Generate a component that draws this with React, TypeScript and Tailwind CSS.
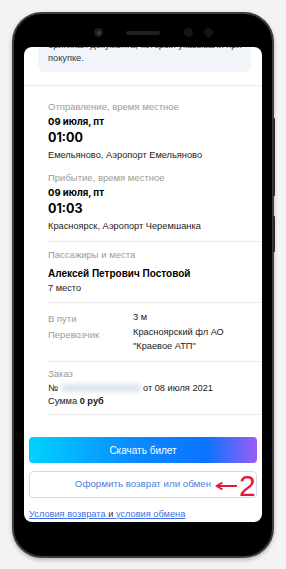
export default function App() {
  return (
    <div className="w-[286px] h-[569px] overflow-hidden bg-[#f3f3f3] pt-[12px] pl-[12px] font-['Liberation_Sans',Arial,sans-serif]">
      <div className="relative w-[262px] h-[546px] rounded-[30px] bg-black border-[2px] border-[#3d3d3d] shadow-[0_2px_4px_rgba(0,0,0,0.25)] flex flex-col">
        {/* side buttons */}
        <div className="absolute right-[-3px] top-[104px] w-[2px] h-[78px] rounded-full bg-[#2a2a2a]" />
        <div className="absolute right-[-3px] top-[202px] w-[2px] h-[36px] rounded-full bg-[#2a2a2a]" />

        {/* top bezel */}
        <div className="h-[33px] pt-[4px] pl-[80px] flex items-center">
          <div className="w-[9px] h-[9px] rounded-full bg-[#1d1d1f] flex items-center justify-center">
            <div className="w-[4px] h-[4px] rounded-full bg-[#3a3d44]" />
          </div>
          <div className="ml-[23px] w-[34px] h-[4px] rounded-full bg-[#202020]" />
          <div className="ml-[24px] w-[9px] h-[9px] rounded-full bg-[#151515]" />
          <div className="ml-[11px] w-[9px] h-[9px] rounded-full bg-[#151515]" />
        </div>

        {/* screen */}
        <div className="ml-[10px] w-[238px] h-[475px] rounded-[8px] bg-white overflow-hidden">
          <div className="-mt-[16px]">
            <div className="mx-[14px] w-[213px] rounded-[6px] bg-[#f1f4f9] px-[10px] pt-[8px] pb-[7px] text-[9.25px] leading-[13px] text-[#2d3450]">
              <div className="whitespace-nowrap">оригинал документа, который указывали при</div>
              <div>покупке.</div>
            </div>
            <div className="mt-[13px] h-px bg-[#ececec]" />

            {/* departure / arrival */}
            <div className="pl-[24px] pt-[14px] pb-[7px]">
              <div className="text-[9.5px] leading-[14px] text-[#9b9b9b]">Отправление, время местное</div>
              <div className="text-[9.5px] leading-[16px] font-bold font-['Inter',sans-serif] text-black">09 июля, пт</div>
              <div className="text-[12.5px] leading-[16px] font-bold font-['Inter',sans-serif] text-black">01:00</div>
              <div className="mt-[1px] text-[9.25px] leading-[16px] text-[#1a1a1a]">Емельяново, Аэропорт Емельяново</div>
              <div className="mt-[8px] text-[9.5px] leading-[14px] text-[#9b9b9b]">Прибытие, время местное</div>
              <div className="text-[9.5px] leading-[16px] font-bold font-['Inter',sans-serif] text-black">09 июля, пт</div>
              <div className="text-[12.5px] leading-[16px] font-bold font-['Inter',sans-serif] text-black">01:03</div>
              <div className="mt-[1px] text-[9.25px] leading-[16px] text-[#1a1a1a]">Красноярск, Аэропорт Черемшанка</div>
            </div>
            <div className="ml-[24px] h-px bg-[#ececec]" />

            {/* passengers */}
            <div className="pl-[24px] pt-[6px] pb-[7px]">
              <div className="text-[9.5px] leading-[14px] text-[#9b9b9b]">Пассажиры и места</div>
              <div className="mt-[5px] text-[10px] leading-[14px] font-bold text-black">Алексей Петрович Постовой</div>
              <div className="text-[9.25px] leading-[14px] text-[#1a1a1a]">7 место</div>
            </div>
            <div className="ml-[24px] h-px bg-[#ececec]" />

            {/* trip details */}
            <div className="pl-[24px] pt-[9px] pb-[8px] text-[9.25px] leading-[14px]">
              <div className="flex items-start">
                <div className="w-[85px] text-[9.5px] text-[#9b9b9b]">В пути</div>
                <div className="-mt-[2px] text-[#1a1a1a]">3 м</div>
              </div>
              <div className="mt-[2px] flex items-start">
                <div className="w-[85px] text-[9.5px] text-[#9b9b9b]">Перевозчик</div>
                <div className="-mt-[3px] text-[#1a1a1a]">
                  <div>Красноярский фл АО</div>
                  <div>"Краевое АТП"</div>
                </div>
              </div>
            </div>
            <div className="ml-[24px] h-px bg-[#ececec]" />

            {/* order */}
            <div className="pl-[24px] pt-[5px] pb-[6px] text-[9.25px] leading-[14px] text-[#1a1a1a]">
              <div className="text-[9.5px] text-[#9b9b9b]">Заказ</div>
              <div className="flex items-center">
                <span>№</span>
                <span className="ml-[3px] mr-[2px] w-[80px] h-[8px] rounded-full bg-[#dde3ee] blur-[2px]" />
                <span>от 08 июля 2021</span>
              </div>
              <div className="leading-[13px]">
                Сумма <span className="font-bold">0 руб</span>
              </div>
            </div>
            <div className="ml-[24px] h-px bg-[#ececec]" />

            {/* actions */}
            <div className="px-[5px]">
              <div className="mt-[22px] h-[26px] rounded-[4px] bg-[linear-gradient(90deg,#00d2ff_0%,#0a8bff_45%,#0a74ff_78%,#9b5cf6_100%)] flex items-center justify-center text-[10px] text-white">
                Скачать билет
              </div>
              <div className="relative mt-[8px] h-[27px] rounded-[4px] border border-[#cddcf3] flex items-center justify-center text-[9.75px] text-[#4a7fe0]">
                Оформить возврат или обмен
                <svg className="absolute left-[185px] top-[9px]" width="23" height="10" viewBox="0 0 23 10">
                  <path d="M2 5H22" stroke="#e8173c" strokeWidth="2" />
                  <path d="M7.5 1.5L1.5 5L7.5 8.5" fill="none" stroke="#e8173c" strokeWidth="2" strokeLinejoin="round" />
                </svg>
                <span className="absolute left-[209px] -top-[1px] text-[30px] leading-[30px] text-[#e8173c]">2</span>
              </div>
              <div className="mt-[9px] text-[9.25px] leading-[14px] whitespace-nowrap">
                <span className="text-[#3c6fe0] underline decoration-[#3c6fe0]">Условия возврата</span>
                <span className="text-[#333] underline decoration-[#3c6fe0]"> и </span>
                <span className="text-[#3c6fe0] underline decoration-[#3c6fe0]">условия обмена</span>
              </div>
            </div>
          </div>
        </div>
      </div>
    </div>
  );
}
